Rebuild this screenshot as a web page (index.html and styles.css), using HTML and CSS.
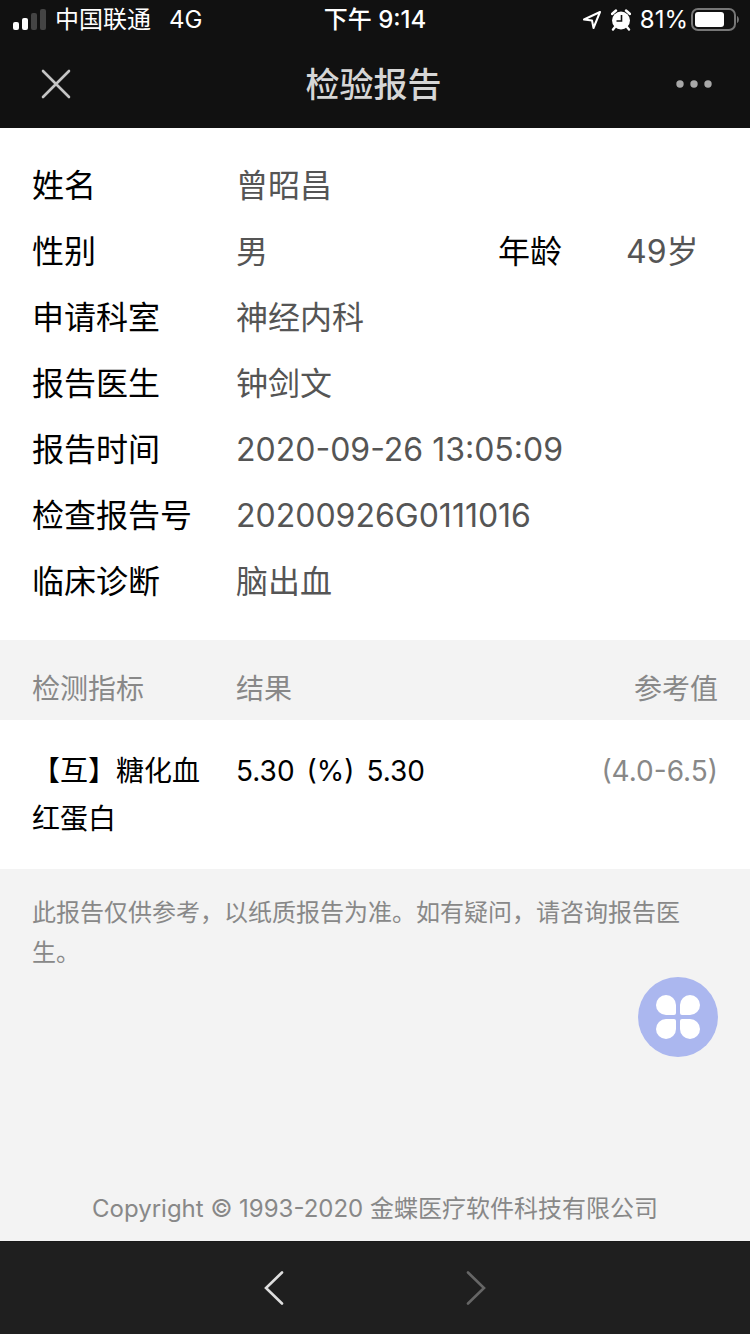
FILE: index.html
```html
<!DOCTYPE html>
<html lang="zh-CN">
<head>
  <meta charset="utf-8">
  <meta name="viewport" content="width=device-width, initial-scale=1">
  <title>检验报告</title>
  <link rel="stylesheet" href="styles.css">
</head>
<body>
  <header class="top">
    <div class="status-bar">
      <div class="status-left">
        <svg class="icon-signal" width="34" height="22" viewBox="0 0 34 22">
          <rect x="1" y="13" width="6" height="8" rx="2" fill="#fff"/>
          <rect x="10" y="9" width="6" height="12" rx="2" fill="#fff"/>
          <rect x="19" y="4" width="6" height="17" rx="2" fill="#444"/>
          <rect x="28" y="0" width="6" height="21" rx="2" fill="#444"/>
        </svg>
        <span>中国联通</span>
        <span class="network">4G</span>
      </div>
      <div class="status-time">下午 9:14</div>
      <div class="status-right">
        <svg width="20" height="20" viewBox="0 0 20 20" fill="none" stroke="#fff" stroke-width="2" stroke-linejoin="round">
          <path d="M18 2 L2 9.500 L10 10.500 L11.500 18 Z"/>
        </svg>
        <svg class="icon-alarm" width="20" height="22" viewBox="0 0 20 22">
          <circle cx="10" cy="11.500" r="9" fill="#fff"/>
          <path d="M1 5 L5 1.500 M19 5 L15 1.500 M4 18 L2 20.500 M16 18 L18 20.500" stroke="#fff" stroke-width="2.400" stroke-linecap="round"/>
          <path d="M10.500 6 V12 H5.500" fill="none" stroke="#111" stroke-width="1.600"/>
        </svg>
        <span>81%</span>
        <svg class="icon-battery" width="48" height="24" viewBox="0 0 48 24">
          <rect x="1" y="1" width="43" height="21" rx="6" fill="none" stroke="#777" stroke-width="2"/>
          <rect x="4" y="4" width="29" height="15" rx="3" fill="#fff"/>
          <path d="M46 8 C48.500 9 48.500 14 46 15 Z" fill="#777"/>
        </svg>
      </div>
    </div>
    <div class="nav-bar">
      <button class="nav-btn" type="button" aria-label="关闭">
        <svg width="30" height="30" viewBox="0 0 30 30" stroke="#c4c4c4" stroke-width="2.600" stroke-linecap="round">
          <path d="M2 2 L28 28 M28 2 L2 28"/>
        </svg>
      </button>
      <h1>检验报告</h1>
      <button class="nav-btn" type="button" aria-label="更多">
        <svg width="36" height="8" viewBox="0 0 36 8" fill="#a8a8a8">
          <circle cx="4" cy="4" r="3.700"/>
          <circle cx="18" cy="4" r="3.700"/>
          <circle cx="32" cy="4" r="3.700"/>
        </svg>
      </button>
    </div>
  </header>

  <main class="report">
    <dl class="info">
      <div class="info-row"><dt>姓名</dt><dd>曾昭昌</dd></div>
      <div class="info-row">
        <dt>性别</dt><dd>男</dd>
        <dt class="age-label">年龄</dt><dd class="age">49岁</dd>
      </div>
      <div class="info-row"><dt>申请科室</dt><dd>神经内科</dd></div>
      <div class="info-row"><dt>报告医生</dt><dd>钟剑文</dd></div>
      <div class="info-row"><dt>报告时间</dt><dd>2020-09-26 13:05:09</dd></div>
      <div class="info-row"><dt>检查报告号</dt><dd>20200926G0111016</dd></div>
      <div class="info-row"><dt>临床诊断</dt><dd>脑出血</dd></div>
    </dl>

    <table class="results">
      <thead>
        <tr>
          <th class="col-name">检测指标</th>
          <th class="col-value">结果</th>
          <th class="col-ref">参考值</th>
        </tr>
      </thead>
      <tbody>
        <tr>
          <td class="col-name">【互】糖化血红蛋白</td>
          <td class="col-value"><span>5.30</span><span class="unit">(%)</span><span>5.30</span></td>
          <td class="col-ref">(4.0-6.5)</td>
        </tr>
      </tbody>
    </table>

    <p class="note">此报告仅供参考，以纸质报告为准。如有疑问，请咨询报告医生。</p>
    <p class="copyright">Copyright © 1993-2020 金蝶医疗软件科技有限公司</p>
  </main>

  <button class="fab" type="button" aria-label="菜单">
    <svg width="44" height="44" viewBox="0 0 44 44" fill="#fff">
      <path d="M10 0 A10 10 0 0 1 20 10 V18 A2 2 0 0 1 18 20 H10 A10 10 0 0 1 10 0 Z"/>
      <path d="M34 0 A10 10 0 0 1 34 20 H26 A2 2 0 0 1 24 18 V10 A10 10 0 0 1 34 0 Z"/>
      <path d="M10 24 H18 A2 2 0 0 1 20 26 V34 A10 10 0 1 1 10 24 Z"/>
      <path d="M26 24 H34 A10 10 0 1 1 24 34 V26 A2 2 0 0 1 26 24 Z"/>
    </svg>
  </button>

  <nav class="bottom-bar">
    <button class="nav-btn" type="button" aria-label="后退">
      <svg width="20" height="34" viewBox="0 0 20 34" fill="none" stroke="#dedede" stroke-width="2.600" stroke-linecap="round">
        <path d="M18 1.500 L2 17 L18 32.500"/>
      </svg>
    </button>
    <button class="nav-btn" type="button" aria-label="前进">
      <svg width="20" height="34" viewBox="0 0 20 34" fill="none" stroke="#666" stroke-width="2.600" stroke-linecap="round">
        <path d="M2 1.500 L18 17 L2 32.500"/>
      </svg>
    </button>
  </nav>
</body>
</html>
```

FILE: styles.css
```css
* {
  box-sizing: border-box;
}

body {
  margin: 0;
  min-height: 100vh;
  display: flex;
  flex-direction: column;
  background: #f3f3f3;
  color: #000;
  font-family: Inter, "Noto Sans CJK SC", sans-serif;
  font-size: 28px;
}

button {
  padding: 0;
  border: 0;
  background: none;
  cursor: pointer;
}

svg {
  display: block;
}

/* Header */
.top {
  background: #111;
  color: #fff;
}

.status-bar {
  display: grid;
  grid-template-columns: 1fr auto 1fr;
  align-items: center;
  height: 40px;
  padding: 0 12px;
  font-size: 24px;
  line-height: 40px;
}

.status-left,
.status-right {
  display: flex;
  align-items: center;
}

.status-left {
  gap: 9px;
}

.network {
  margin-left: 9px;
}

.status-time {
  font-weight: 500;
}

.status-right {
  justify-content: flex-end;
  gap: 9px;
}

.icon-battery {
  margin: 0 -1px 0 -6px;
}

.nav-bar {
  display: flex;
  align-items: center;
  justify-content: space-between;
  height: 88px;
  padding: 0 38px 0 41px;
}

.nav-bar h1 {
  margin: 0;
  padding-bottom: 3px;
  color: #d6d6d6;
  font-size: 34px;
  font-weight: 500;
}

/* Patient info */
.report {
  flex: 1;
  display: flex;
  flex-direction: column;
}

.info {
  margin: 0;
  padding: 25px 32px;
  background: #fff;
  font-size: 32px;
  line-height: 66px;
}

.info-row {
  display: flex;
}

.info dt {
  width: 204px;
}

.info dd {
  flex: 1;
  margin: 0;
  color: #555;
}

.info .age-label {
  width: 128px;
}

.info .age {
  flex: none;
  width: 92px;
}

/* Results */
.results {
  width: 100%;
  border-collapse: collapse;
  table-layout: fixed;
  line-height: 48px;
}

.results th {
  padding: 25px 0 7px;
  color: #888;
  font-weight: 400;
  text-align: left;
}

.results td {
  padding: 27px 0 26px;
  background: #fff;
  vertical-align: top;
}

.results .col-name {
  width: 236px;
  padding-left: 32px;
  padding-right: 32px;
}

.results .col-ref {
  width: 240px;
  padding-right: 32px;
  color: #888;
  text-align: right;
}

.unit {
  margin: 0 12px;
}

.note {
  margin: 0;
  padding: 24px 32px;
  color: #888;
  font-size: 24px;
  line-height: 40px;
}

.copyright {
  margin: auto 0 0;
  padding: 12px 0;
  color: #888;
  font-size: 24px;
  line-height: 40px;
  text-align: center;
}

/* Floating menu */
.fab {
  position: fixed;
  right: 32px;
  bottom: 277px;
  display: flex;
  align-items: center;
  justify-content: center;
  width: 80px;
  height: 80px;
  border-radius: 50%;
  background: #abb7ef;
}

/* Browser controls */
.bottom-bar {
  display: flex;
  align-items: center;
  justify-content: center;
  gap: 182px;
  height: 93px;
  border-top: 1px solid #191919;
  background: #1f1f1f;
}
```
